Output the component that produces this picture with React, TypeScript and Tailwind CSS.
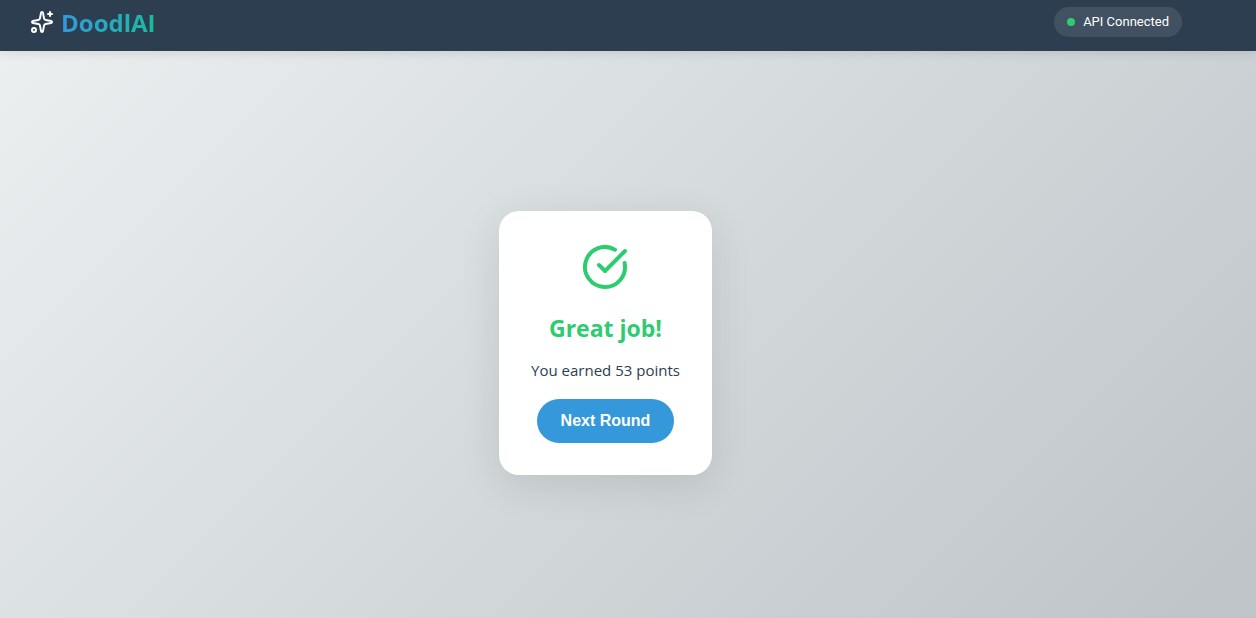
import React from "react";
import { CircleCheckBig, Sparkles } from "lucide-react";

function Header() {
  return (
    <header className="relative flex items-start justify-between bg-[#2c3e50] pt-[7px] pr-[74px] pb-3 pl-[30px] shadow-[0_2px_10px_rgba(0,0,0,0.1)]">
      <div className="flex items-start gap-[7px]">
        <Sparkles size={24} className="mt-[3px] text-white" aria-hidden="true" />
        <h1 className="bg-linear-to-r from-[#3498db] to-[#1abc9c] bg-clip-text text-2xl leading-8 font-bold text-transparent">
          DoodlAI
        </h1>
      </div>
      <div className="flex h-[30px] items-center gap-2 rounded-full bg-white/10 px-[13px] font-[Roboto,sans-serif] text-[13px] text-white">
        <span className="size-2 rounded-full bg-[#2ecc71]" />
        <span>API Connected</span>
      </div>
    </header>
  );
}

function ResultCard() {
  return (
    <section className="flex flex-col items-center rounded-[20px] bg-white p-8 shadow-[0_10px_40px_rgba(0,0,0,0.1)]">
      <CircleCheckBig size={48} className="text-[#2ecc71]" aria-hidden="true" />
      <h2 className="mt-5 text-[23px] leading-[34px] font-bold text-[#2ecc71]">Great job!</h2>
      <p className="mt-3 text-[15px] leading-[26px] text-[#2c3e50]">You earned 53 points</p>
      <button
        type="button"
        className="mt-4 h-11 rounded-full bg-[#3498db] px-6 font-['Liberation_Sans',Arial,sans-serif] text-base font-bold text-white"
      >
        Next Round
      </button>
    </section>
  );
}

export default function App() {
  return (
    <div className="flex min-h-screen flex-col bg-linear-[135deg,#ecf0f1,#bdc3c7] font-['Open_Sans','Noto_Sans',sans-serif]">
      <Header />
      <main className="flex flex-1 items-center justify-center pt-4 pr-[45px]">
        <ResultCard />
      </main>
    </div>
  );
}
